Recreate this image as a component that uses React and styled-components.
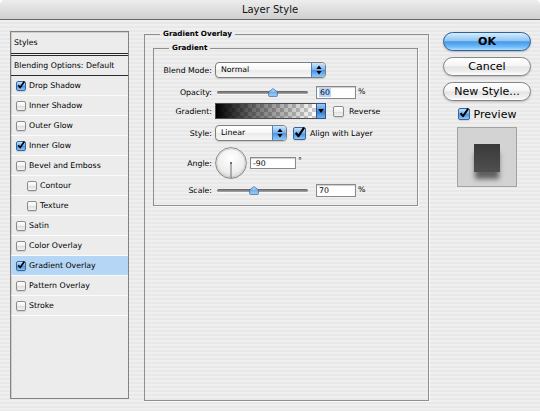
import React from "react";
import styled, { createGlobalStyle } from "styled-components";

const Global = createGlobalStyle`
  html, body { margin: 0; padding: 0; background: #fff; }
  body { font-family: "DejaVu Sans", "Noto Sans", sans-serif; color: #000; }
  * { box-sizing: border-box; }
`;

const Window = styled.div`
  width: 540px;
  height: 411px;
  display: flex;
  flex-direction: column;
  border-radius: 5px 5px 0 0;
  overflow: hidden;
  background: repeating-linear-gradient(180deg, #efefef 0 2px, #e8e8e8 2px 4px);
`;

const TitleBar = styled.div`
  flex: none;
  height: 20px;
  border-bottom: 1px solid #6a6a6a;
  background: linear-gradient(#ededed, #d0d0d0);
  display: flex;
  align-items: center;
  justify-content: center;
  font-size: 10px;
  color: #111;
`;

const Body = styled.div`
  flex: 1;
  display: flex;
  align-items: flex-start;
  padding-left: 10px;
`;

/* ---------- left styles list ---------- */
const StylesPanel = styled.div`
  width: 119px;
  height: 368px;
  margin-top: 11px;
  border: 1px solid #838383;
  box-shadow: inset 1px 1px 0 #cfcfcf;
  background: #ececec;
  display: flex;
  flex-direction: column;
  font-size: 7.8px;
`;

const PanelHeader = styled.div`
  height: 24px;
  padding-left: 3px;
  display: flex;
  align-items: center;
  border-bottom: 3px double #2a2a2a;
`;

const BlendRow = styled.div`
  height: 20px;
  padding-left: 3px;
  display: flex;
  align-items: center;
  border-bottom: 1px solid #2a2a2a;
`;

const StyleRow = styled.div`
  height: 20px;
  flex: none;
  display: flex;
  align-items: center;
  gap: 3px;
  padding-left: ${(p) => (p.$sub ? 16 : 5)}px;
  border-bottom: 1px solid #fbfbfb;
  background: ${(p) => (p.$selected ? "#b6d6f6" : "transparent")};
`;

/* ---------- checkbox ---------- */
const Box = styled.span`
  flex: none;
  position: relative;
  width: ${(p) => p.$size}px;
  height: ${(p) => p.$size}px;
  border-radius: 2px;
  border: 1px solid ${(p) => (p.$checked ? "#3a659c" : "#8c8c8c")};
  background: ${(p) =>
    p.$checked
      ? "linear-gradient(#c4e2fc, #6eaeec 50%, #4a94e2 55%, #8cc8f8)"
      : "linear-gradient(#ffffff, #f1f1f1 50%, #dedede 55%, #f4f4f4)"};
  box-shadow: 0 1px 1px rgba(0, 0, 0, 0.12);
`;

const Tick = styled.svg`
  position: absolute;
  left: 0;
  top: -1px;
  width: 100%;
  height: 100%;
  overflow: visible;
`;

function Check({ checked, size = 10 }) {
  return (
    <Box $checked={checked} $size={size}>
      {checked && (
        <Tick viewBox="0 0 10 10">
          <path d="M1.6 5.2 L4 8.2 L9.2 0.6" fill="none" stroke="#000" strokeWidth="2" strokeLinejoin="round" />
        </Tick>
      )}
    </Box>
  );
}

/* ---------- group boxes ---------- */
const Group = styled.fieldset`
  margin: 9px 0 0 15px;
  padding: 4px 10px 0 8px;
  width: 285px;
  height: 372px;
  min-width: 0;
  border: 1px solid #8f8f8f;
  box-shadow: 1px 1px 0 #fafafa;
`;

const InnerGroup = styled.fieldset`
  margin: 0;
  padding: 0;
  width: 265px;
  height: 163px;
  min-width: 0;
  border: 1px solid #8f8f8f;
  box-shadow: 1px 1px 0 #fafafa;
`;

const Legend = styled.legend`
  margin-left: ${(p) => p.$offset}px;
  padding: 0 3px;
  font-size: 7.2px;
  font-weight: bold;
  line-height: 10px;
`;

const Form = styled.div`
  padding-top: 9px;
  display: flex;
  flex-direction: column;
`;

const FormRow = styled.div`
  display: grid;
  grid-template-columns: 58px auto;
  column-gap: 3px;
  align-items: center;
  height: ${(p) => p.$h}px;
  margin-top: ${(p) => p.$mt}px;
  font-size: 7.8px;
`;

const Label = styled.span`
  text-align: right;
  white-space: nowrap;
`;

const Controls = styled.div`
  display: flex;
  align-items: center;
  height: 100%;
`;

/* select */
const SelectBox = styled.div`
  width: ${(p) => p.$w}px;
  height: 16px;
  display: flex;
  border: 1px solid #7d7d7d;
  border-radius: 4px;
  overflow: hidden;
  background: linear-gradient(#ffffff, #f6f6f6 50%, #e9e9e9 52%, #f7f7f7);
  box-shadow: 0 1px 1px rgba(0, 0, 0, 0.15);
`;

const SelectText = styled.span`
  flex: 1;
  padding-left: 5px;
  line-height: 14px;
`;

const Stepper = styled.span`
  width: 14px;
  border-left: 1px solid #4f7fb8;
  background: linear-gradient(#cfe7fc, #78b4ee 48%, #4a94e2 52%, #8fcbfa);
  display: flex;
  align-items: center;
  justify-content: center;
`;

function Select({ w, value }) {
  return (
    <SelectBox $w={w}>
      <SelectText>{value}</SelectText>
      <Stepper>
        <svg width="6" height="10" viewBox="0 0 6 10">
          <path d="M3 0.5 L5.6 4 L0.4 4 Z" fill="#000" />
          <path d="M3 9.5 L5.6 6 L0.4 6 Z" fill="#000" />
        </svg>
      </Stepper>
    </SelectBox>
  );
}

/* slider */
const SliderWrap = styled.div`
  position: relative;
  width: 95px;
  height: 14px;
  padding: 0 2px;
  display: flex;
  align-items: center;
`;

const Track = styled.div`
  flex: 1;
  height: 3px;
  border-radius: 2px;
  background: linear-gradient(#5f5f5f, #a8a8a8);
  box-shadow: 0 1px 0 #fafafa;
`;

const Knob = styled.svg`
  position: absolute;
  top: 3px;
  width: 10px;
  height: 9px;
  margin-left: -5px;
`;

function Slider({ frac, id }) {
  return (
    <SliderWrap>
      <Track />
      <Knob viewBox="0 0 10 9" style={{ left: `${2 + frac * 91}px` }}>
        <defs>
          <linearGradient id={id} x1="0" y1="0" x2="0" y2="1">
            <stop offset="0" stopColor="#d8ecfd" />
            <stop offset="0.5" stopColor="#6fb0ee" />
            <stop offset="1" stopColor="#a6d6fb" />
          </linearGradient>
        </defs>
        <path d="M5 0.6 L9.4 4 L9.4 7.6 Q9.4 8.4 8.6 8.4 L1.4 8.4 Q0.6 8.4 0.6 7.6 L0.6 4 Z" fill={`url(#${id})`} stroke="#44679a" strokeWidth="0.8" />
      </Knob>
    </SliderWrap>
  );
}

/* text field */
const Field = styled.div`
  width: ${(p) => p.$w}px;
  height: ${(p) => p.$h}px;
  margin-left: ${(p) => p.$ml}px;
  background: #fff;
  border: 1px solid #8a8a8a;
  box-shadow: inset 0 1px 1px rgba(0, 0, 0, 0.2);
  padding-left: 2px;
  display: flex;
  align-items: center;
`;

const Selected = styled.span`
  background: #b5d5ff;
  padding: 0 1px;
`;

const Unit = styled.span`
  margin-left: 2px;
  align-self: ${(p) => (p.$top ? "flex-start" : "center")};
  margin-top: ${(p) => (p.$top ? 9 : 0)}px;
  line-height: 10px;
`;

/* gradient swatch */
const Swatch = styled.div`
  width: 101px;
  height: 16px;
  border: 1px solid #4d4d4d;
  border-right: none;
  background: linear-gradient(90deg, #000 0%, rgba(0, 0, 0, 0.55) 40%, rgba(0, 0, 0, 0) 100%),
    conic-gradient(#cdcdcd 25%, #ffffff 0 50%, #cdcdcd 0 75%, #ffffff 0) 0 0 / 8px 8px;
`;

const SwatchArrow = styled.div`
  width: 10px;
  height: 16px;
  border: 1px solid #2d5691;
  background: linear-gradient(#9ccbf5, #4f92dc 50%, #3a7ccc 55%, #6fb1ef);
  display: flex;
  align-items: center;
  justify-content: center;
`;

const CheckLabel = styled.label`
  display: flex;
  align-items: center;
  gap: ${(p) => p.$gap}px;
  margin-left: ${(p) => p.$ml}px;
`;

/* dial */
function Dial() {
  return (
    <svg width="32" height="32" viewBox="0 0 32 32">
      <defs>
        <radialGradient id="dialFill" cx="0.5" cy="0.35" r="0.65">
          <stop offset="0" stopColor="#ffffff" />
          <stop offset="0.7" stopColor="#eeeeee" />
          <stop offset="1" stopColor="#d4d4d4" />
        </radialGradient>
      </defs>
      <circle cx="16" cy="16" r="15.4" fill="url(#dialFill)" stroke="#8a8a8a" strokeWidth="1" />
      <circle cx="16" cy="16" r="14.2" fill="none" stroke="#c9c9c9" strokeWidth="0.8" />
      <line x1="16" y1="16" x2="16" y2="31" stroke="#6a6a6a" strokeWidth="1" />
      <circle cx="16" cy="16" r="1.1" fill="#555" />
    </svg>
  );
}

/* ---------- right column ---------- */
const Side = styled.div`
  margin: 12px 0 0 14px;
  width: 88px;
  display: flex;
  flex-direction: column;
  align-items: center;
`;

const Button = styled.button`
  width: 88px;
  height: 19px;
  margin-bottom: 6px;
  padding: 0;
  border-radius: 10px;
  font-family: inherit;
  font-size: 11px;
  line-height: 17px;
  color: #000;
  font-weight: ${(p) => (p.$primary ? "bold" : "normal")};
  border: 1px solid ${(p) => (p.$primary ? "#2f5f9a" : "#858585")};
  background: ${(p) =>
    p.$primary
      ? "linear-gradient(#d6edfd 0%, #8fc6f4 45%, #4898e8 52%, #6bb8fa 80%, #b0e0ff 100%)"
      : "linear-gradient(#ffffff 0%, #f5f5f5 45%, #e4e4e4 52%, #eeeeee 80%, #ffffff 100%)"};
  box-shadow: 0 1px 2px rgba(0, 0, 0, 0.22);
`;

const PreviewRow = styled.label`
  margin-top: 1px;
  height: 12px;
  display: flex;
  align-items: center;
  gap: 4px;
  font-size: 11px;
`;

const Thumb = styled.div`
  margin-top: 7px;
  width: 60px;
  height: 60px;
  border: 1px solid #a3a3a3;
  background: #d3d3d3;
  display: flex;
  justify-content: center;
  padding-top: 16px;
`;

const ThumbShape = styled.div`
  width: 26px;
  height: 28px;
  background: linear-gradient(#393939, #4f4f4f);
  box-shadow: 0 8px 5px -1px rgba(0, 0, 0, 0.55);
`;

const styleItems = [
  { name: "Drop Shadow", checked: true },
  { name: "Inner Shadow" },
  { name: "Outer Glow" },
  { name: "Inner Glow", checked: true },
  { name: "Bevel and Emboss" },
  { name: "Contour", sub: true },
  { name: "Texture", sub: true },
  { name: "Satin" },
  { name: "Color Overlay" },
  { name: "Gradient Overlay", checked: true, selected: true },
  { name: "Pattern Overlay" },
  { name: "Stroke" },
];

export default function App() {
  return (
    <>
      <Global />
      <Window>
        <TitleBar>Layer Style</TitleBar>
        <Body>
          <StylesPanel>
            <PanelHeader>Styles</PanelHeader>
            <BlendRow>Blending Options: Default</BlendRow>
            {styleItems.map((it) => (
              <StyleRow key={it.name} $sub={it.sub} $selected={it.selected}>
                <Check checked={!!it.checked} size={10} />
                <span>{it.name}</span>
              </StyleRow>
            ))}
          </StylesPanel>

          <Group>
            <Legend $offset={7}>Gradient Overlay</Legend>
            <InnerGroup>
              <Legend $offset={15}>Gradient</Legend>
              <Form>
                <FormRow $h={16} $mt={0}>
                  <Label>Blend Mode:</Label>
                  <Controls>
                    <Select w={111} value="Normal" />
                  </Controls>
                </FormRow>
                <FormRow $h={14} $mt={7}>
                  <Label>Opacity:</Label>
                  <Controls>
                    <Slider frac={0.615} id="k1" />
                    <Field $w={40} $h={13} $ml={6}>
                      <Selected>60</Selected>
                    </Field>
                    <Unit>%</Unit>
                  </Controls>
                </FormRow>
                <FormRow $h={16} $mt={4}>
                  <Label>Gradient:</Label>
                  <Controls>
                    <Swatch />
                    <SwatchArrow>
                      <svg width="6" height="4" viewBox="0 0 6 4">
                        <path d="M0 0 L6 0 L3 4 Z" fill="#000" />
                      </svg>
                    </SwatchArrow>
                    <CheckLabel $gap={5} $ml={7}>
                      <Check checked={false} size={11} />
                      <span>Reverse</span>
                    </CheckLabel>
                  </Controls>
                </FormRow>
                <FormRow $h={16} $mt={6}>
                  <Label>Style:</Label>
                  <Controls>
                    <Select w={72} value="Linear" />
                    <CheckLabel $gap={4} $ml={6}>
                      <Check checked size={13} />
                      <span>Align with Layer</span>
                    </CheckLabel>
                  </Controls>
                </FormRow>
                <FormRow $h={32} $mt={6}>
                  <Label>Angle:</Label>
                  <Controls>
                    <Dial />
                    <Field $w={46} $h={12} $ml={3}>
                      -90
                    </Field>
                    <Unit $top>°</Unit>
                  </Controls>
                </FormRow>
                <FormRow $h={14} $mt={4}>
                  <Label>Scale:</Label>
                  <Controls>
                    <Slider frac={0.407} id="k2" />
                    <Field $w={40} $h={13} $ml={6}>
                      70
                    </Field>
                    <Unit>%</Unit>
                  </Controls>
                </FormRow>
              </Form>
            </InnerGroup>
          </Group>

          <Side>
            <Button $primary>OK</Button>
            <Button>Cancel</Button>
            <Button>New Style...</Button>
            <PreviewRow>
              <Check checked size={12} />
              <span>Preview</span>
            </PreviewRow>
            <Thumb>
              <ThumbShape />
            </Thumb>
          </Side>
        </Body>
      </Window>
    </>
  );
}
